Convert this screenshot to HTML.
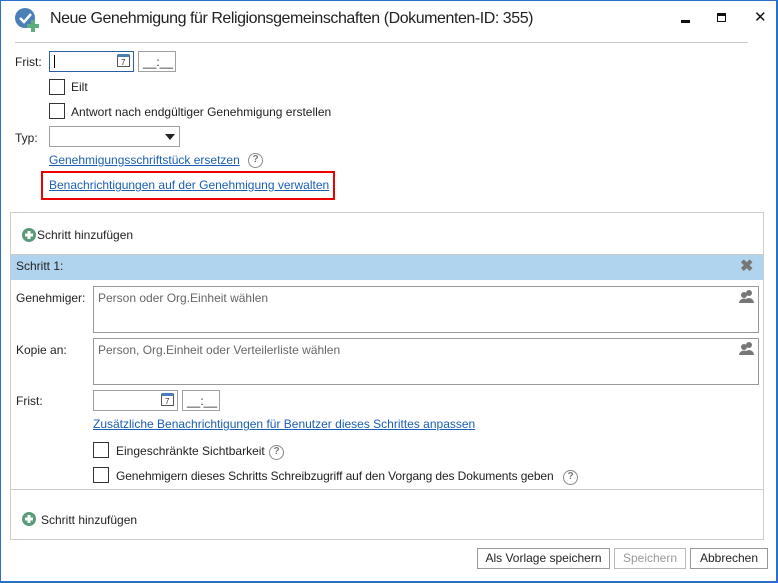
<!DOCTYPE html>
<html><head><meta charset="utf-8"><style>
*{margin:0;padding:0;box-sizing:border-box}
body{width:778px;height:583px;overflow:hidden;background:#fff;font-family:"Liberation Sans",sans-serif;font-size:12px;color:#222;position:relative}
.a{position:absolute;white-space:nowrap}
.lnk{color:#1a5fb4;text-decoration:underline}
.box{position:absolute;border:1px solid #a0a0a0;background:#fff}
.cb{position:absolute;width:16px;height:16px;border:1px solid #333;background:#fff}
.q{position:absolute;width:15px;height:15px;border:1.5px solid #888;border-radius:50%;font-size:10px;color:#777;text-align:center;line-height:12px;font-weight:bold}
.btn{position:absolute;height:21px;border:1px solid #999;background:#fff;text-align:center;line-height:19px;font-size:12px}
.ph{color:#666}
</style></head><body>
<div class="a" style="left:0;top:0;width:778px;height:583px;border:1px solid #2a6fc9;border-width:1px 2px 2px 1px"></div>
<svg class="a" style="left:14px;top:7px" width="26" height="26" viewBox="0 0 26 26"><circle cx="11" cy="11" r="10" fill="#4a7fb8"/><path d="M6 11l4 4 7-8" stroke="#fff" stroke-width="2.5" fill="none"/><rect x="17" y="13" width="4" height="12" fill="#5cae7c"/><rect x="13" y="17" width="12" height="4" fill="#5cae7c"/></svg>
<div class="a" style="left:50px;top:10px;font-size:16px;letter-spacing:-0.45px;color:#222">Neue Genehmigung für Religionsgemeinschaften (Dokumenten-ID: 355)</div>
<div class="a" style="left:681px;top:20px;width:9px;height:3px;background:#111"></div>
<div class="a" style="left:717px;top:13px;width:9px;height:9px;border:1.5px solid #111;border-top-width:3px"></div>
<div class="a" style="left:754px;top:8px;font-size:15px;color:#111">✕</div>
<div class="a" style="left:15px;top:42px;width:733px;height:1px;background:#ccc"></div>

<div class="a" style="left:15px;top:55px">Frist:</div>
<div class="box" style="left:49px;top:51px;width:85px;height:21px;border-color:#2a5fa8"></div>
<div class="a" style="left:54px;top:55px;width:1px;height:13px;background:#000"></div>
<svg class="a" style="left:117px;top:53px" width="13" height="14"><rect x="0.5" y="2.5" width="12" height="11" fill="#fff" stroke="#555"/><rect x="0.5" y="1" width="12" height="3" fill="#4a7fb8"/><text x="4" y="12" font-size="8" fill="#333" font-family="Liberation Sans">7</text></svg>
<div class="box" style="left:138px;top:51px;width:38px;height:21px"></div>
<div class="a" style="left:143px;top:55px">__:__</div>
<div class="cb" style="left:49px;top:79px"></div><div class="a" style="left:71px;top:80px">Eilt</div>
<div class="cb" style="left:49px;top:103px"></div><div class="a" style="left:71px;top:105px">Antwort nach endgültiger Genehmigung erstellen</div>
<div class="a" style="left:15px;top:131px">Typ:</div>
<div class="box" style="left:49px;top:126px;width:131px;height:21px"></div>
<div class="a" style="left:165px;top:134px;border:5px solid transparent;border-top:6px solid #222;border-bottom:0"></div>
<div class="a lnk" style="left:49px;top:153px">Genehmigungsschriftstück ersetzen</div>
<div class="q" style="left:248px;top:153px">?</div>
<div class="a" style="left:41px;top:171px;width:294px;height:29px;border:2px solid #e00"></div>
<div class="a lnk" style="left:49px;top:178px">Benachrichtigungen auf der Genehmigung verwalten</div>

<div class="a" style="left:10px;top:212px;width:754px;height:328px;border:1px solid #ccc"></div>
<svg class="a" style="left:22px;top:228px" width="14" height="14"><circle cx="7" cy="7" r="7" fill="#5a9a7a"/><rect x="5.5" y="3" width="3" height="8" fill="#fff"/><rect x="3" y="5.5" width="8" height="3" fill="#fff"/></svg>
<div class="a" style="left:37px;top:228px">Schritt hinzufügen</div>
<div class="a" style="left:11px;top:254px;width:752px;height:236px;border-top:1px solid #ccc;border-bottom:1px solid #ccc"></div>
<div class="a" style="left:11px;top:255px;width:752px;height:25px;background:#b1d4ee"></div>
<div class="a" style="left:16px;top:259px;color:#222">Schritt 1:</div>
<div class="a" style="left:740px;top:256px;font-size:16px;font-weight:bold;color:#777">✖</div>
<div class="a" style="left:16px;top:291px">Genehmiger:</div>
<div class="box" style="left:93px;top:286px;width:666px;height:47px;border-color:#999"></div>
<div class="a ph" style="left:98px;top:291px">Person oder Org.Einheit wählen</div>
<div class="a" style="left:16px;top:343px">Kopie an:</div>
<div class="box" style="left:93px;top:338px;width:666px;height:47px;border-color:#999"></div>
<div class="a ph" style="left:98px;top:343px">Person, Org.Einheit oder Verteilerliste wählen</div>
<svg class="a" style="left:739px;top:290px" width="15" height="13"><circle cx="10" cy="3" r="3" fill="#777"/><path d="M5 13a5 5 0 0 1 10 0z" fill="#777"/><circle cx="5" cy="5" r="3" fill="#777"/><path d="M0 13a5 4.5 0 0 1 10 0z" fill="#777"/></svg>
<svg class="a" style="left:739px;top:342px" width="15" height="13"><circle cx="10" cy="3" r="3" fill="#777"/><path d="M5 13a5 5 0 0 1 10 0z" fill="#777"/><circle cx="5" cy="5" r="3" fill="#777"/><path d="M0 13a5 4.5 0 0 1 10 0z" fill="#777"/></svg>
<div class="a" style="left:16px;top:394px">Frist:</div>
<div class="box" style="left:93px;top:390px;width:85px;height:21px"></div>
<svg class="a" style="left:161px;top:392px" width="13" height="14"><rect x="0.5" y="2.5" width="12" height="11" fill="#fff" stroke="#555"/><rect x="0.5" y="1" width="12" height="3" fill="#4a7fb8"/><text x="4" y="12" font-size="8" fill="#333" font-family="Liberation Sans">7</text></svg>
<div class="box" style="left:182px;top:390px;width:38px;height:21px"></div>
<div class="a" style="left:187px;top:394px">__:__</div>
<div class="a lnk" style="left:93px;top:417px">Zusätzliche Benachrichtigungen für Benutzer dieses Schrittes anpassen</div>
<div class="cb" style="left:93px;top:442px"></div><div class="a" style="left:116px;top:444px">Eingeschränkte Sichtbarkeit</div>
<div class="q" style="left:269px;top:445px">?</div>
<div class="cb" style="left:93px;top:467px"></div><div class="a" style="left:116px;top:469px;letter-spacing:-0.1px">Genehmigern dieses Schritts Schreibzugriff auf den Vorgang des Dokuments geben</div>
<div class="q" style="left:563px;top:470px">?</div>
<svg class="a" style="left:22px;top:512px" width="14" height="14"><circle cx="7" cy="7" r="7" fill="#5a9a7a"/><rect x="5.5" y="3" width="3" height="8" fill="#fff"/><rect x="3" y="5.5" width="8" height="3" fill="#fff"/></svg>
<div class="a" style="left:41px;top:513px">Schritt hinzufügen</div>

<div class="btn" style="left:477px;top:548px;width:133px">Als Vorlage speichern</div>
<div class="btn" style="left:614px;top:548px;width:72px;color:#999;border-color:#bbb">Speichern</div>
<div class="btn" style="left:690px;top:548px;width:78px">Abbrechen</div>
</body></html>
